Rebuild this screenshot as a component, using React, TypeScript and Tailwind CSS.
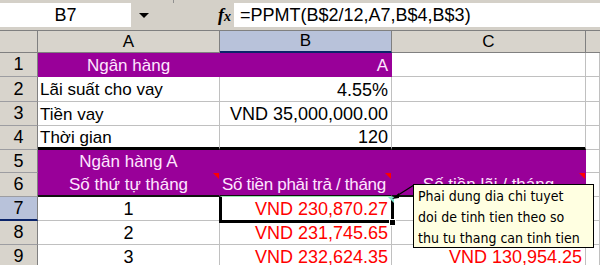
import React from "react";

const HB = "border-[#9d9da1]";

function ColHead({ label, active }: { label: string; active?: boolean }) {
  return (
    <div
      className={
        "flex items-center justify-center border-r border-t border-b text-[17px] text-black " +
        (active
          ? "bg-[#b8c2da] border-r-[#808080] border-t-[#808080] border-b-2 border-b-[#0a246a]"
          : "bg-[#d8d4cc] border-[#808080]")
      }
    >
      {label}
    </div>
  );
}

function RowHead({ n, active }: { n: number; active?: boolean }) {
  return (
    <div
      className={
        "flex items-center justify-center border-r text-[18px] text-black " +
        (active
          ? "bg-[#b8c2da] border-r-[#808080] border-b-2 border-b-[#0a246a]"
          : "bg-[#d8d4cc] border-b " + HB + " border-r-[#808080]")
      }
    >
      {n}
    </div>
  );
}

type CellProps = {
  children?: React.ReactNode;
  purple?: boolean;
  align?: "left" | "center" | "right";
  red?: boolean;
  num?: boolean;
  thickBottom?: boolean;
  darkBottom?: boolean;
  extra?: string;
};

function Cell({ children, purple, align = "left", red, num, thickBottom, darkBottom, extra = "" }: CellProps) {
  const al = align === "left" ? "justify-start pl-[2px]" : align === "center" ? "justify-center" : "justify-end pr-[3px]";
  const bg = purple ? "bg-[#990099] text-[#ffe6ff] border-r-[#990099]" : "bg-white border-r-[#c0c0c0]";
  const bb = thickBottom
    ? "border-b-[3px] border-b-black"
    : darkBottom
    ? "border-b-2 border-b-[#111]"
    : purple
    ? "border-b border-b-[#990099]"
    : "border-b border-b-[#c0c0c0]";
  return (
    <div
      className={
        "relative flex items-center whitespace-nowrap overflow-visible border-r pt-[2px] " +
        (num ? "text-[18px] " : "text-[17px] ") +
        al + " " + bg + " " + bb + " " + (red ? "text-[#ff0000] " : purple ? "" : "text-black ") + extra
      }
    >
      {children}
    </div>
  );
}

function RedTri({ color = "#ff0000" }: { color?: string }) {
  return (
    <div
      className="absolute right-0 top-0 h-0 w-0 border-l-[6px] border-l-transparent border-t-[6px]"
      style={{ borderTopColor: color }}
    />
  );
}

export default function App() {
  return (
    <div className="relative h-[265px] w-[600px] overflow-hidden bg-white font-['Liberation_Sans',Arial,sans-serif]">
      {/* toolbar remnant */}
      <div className="relative h-[3px] bg-[#d4d0c8]">
        <div className="absolute left-[173px] top-0 h-[3px] w-px bg-[#909090]" />
      </div>
      {/* formula bar */}
      <div className="flex h-[24px] bg-[#d4d0c8]">
        <div className="flex w-[131px] items-center justify-center bg-white text-[18px] text-black">B7</div>
        <div className="relative flex w-[103px] items-center">
          <div className="ml-[8px] h-0 w-0 border-l-[5px] border-r-[5px] border-t-[5px] border-l-transparent border-r-transparent border-t-black" />
          <span className="ml-auto mr-[3px] font-['Liberation_Serif',serif] text-[18px] font-bold italic text-black">
            f<span className="text-[14px]">x</span>
          </span>
        </div>
        <div className="flex flex-1 items-center bg-white pl-[6px] text-[18px] text-black">=PPMT(B$2/12,A7,B$4,B$3)</div>
      </div>
      <div className="h-[3px] bg-[#d4d0c8]" />

      {/* grid */}
      <div className="grid grid-cols-[38px_182px_172px_194px_14px] grid-rows-[23px_24px_25px_24px_24px_23px_24px_24px_24px_24px]">
        {/* header */}
        <div className="border-r border-t border-b border-[#808080] bg-[#d8d4cc]" />
        <ColHead label="A" />
        <ColHead label="B" active />
        <ColHead label="C" />
        <div className="border-t border-b border-[#808080] bg-[#d8d4cc]" />

        {/* row 1 */}
        <RowHead n={1} />
        <Cell purple align="center">Ngân hàng</Cell>
        <Cell purple align="right">A</Cell>
        <Cell />
        <Cell />

        {/* row 2 */}
        <RowHead n={2} />
        <Cell>Lãi suất cho vay</Cell>
        <Cell align="right" num>4.55%</Cell>
        <Cell />
        <Cell />

        {/* row 3 */}
        <RowHead n={3} />
        <Cell>Tiền vay</Cell>
        <Cell align="right" num>VND 35,000,000.00</Cell>
        <Cell />
        <Cell />

        {/* row 4 */}
        <RowHead n={4} />
        <Cell thickBottom>Thời gian</Cell>
        <Cell align="right" num thickBottom>120</Cell>
        <Cell thickBottom />
        <Cell />

        {/* row 5 */}
        <RowHead n={5} />
        <Cell purple align="center">Ngân hàng A</Cell>
        <Cell purple />
        <Cell purple />
        <Cell />

        {/* row 6 */}
        <RowHead n={6} />
        <Cell purple align="center" darkBottom>
          Số thứ tự tháng
          <RedTri />
        </Cell>
        <Cell purple darkBottom extra="tracking-[-0.3px]">
          Số tiền phải trả / tháng
          <RedTri />
        </Cell>
        <Cell purple align="center" darkBottom>
          Số tiền lãi / tháng
          <RedTri />
        </Cell>
        <Cell />

        {/* row 7 */}
        <RowHead n={7} active />
        <Cell align="center" num>1</Cell>
        <Cell align="right" red num>
          VND 230,870.27
        </Cell>
        <Cell />
        <Cell />

        {/* row 8 */}
        <RowHead n={8} />
        <Cell align="center" num>2</Cell>
        <Cell align="right" red num>
          VND 231,745.65
        </Cell>
        <Cell />
        <Cell />

        {/* row 9 */}
        <RowHead n={9} />
        <Cell align="center" num>3</Cell>
        <Cell align="right" red num>
          VND 232,624.35
        </Cell>
        <Cell align="right" red num>
          VND 130,954.25
        </Cell>
        <Cell />
      </div>

      {/* selection B7 */}
      <div className="pointer-events-none absolute left-[219px] top-[196px] h-[27px] w-[175px] border-b-[3px] border-l-[3px] border-r-[3px] border-t border-b-black border-l-black border-r-black border-t-[#9be8b0]" />
      <div className="absolute left-[388px] top-[197px] h-0 w-0 border-l-[6px] border-t-[6px] border-l-transparent border-t-[#7fe6d0]" />
      <div className="absolute left-[389px] top-[219px] h-[7px] w-[7px] border border-white bg-black" />

      {/* comment arrow */}
      <svg className="absolute left-[390px] top-[182px]" width="26" height="20" viewBox="0 0 26 20">
        <line x1="24" y1="3" x2="5" y2="15" stroke="black" strokeWidth="1.2" />
        <polygon points="2,17 9,11 9,16" fill="black" />
      </svg>

      {/* comment box */}
      <div className="absolute left-[413px] top-[184px] h-[64px] w-[181px] whitespace-nowrap border border-black bg-[#ffffe1] pl-[4px] pt-[1px] font-['DejaVu_Sans_Condensed','DejaVu_Sans',sans-serif] text-[14px] leading-[21px] text-black">
        <div>Phai dung dia chi tuyet</div>
        <div>doi de tinh tien theo so</div>
        <div>thu tu thang can tinh tien</div>
      </div>
    </div>
  );
}
